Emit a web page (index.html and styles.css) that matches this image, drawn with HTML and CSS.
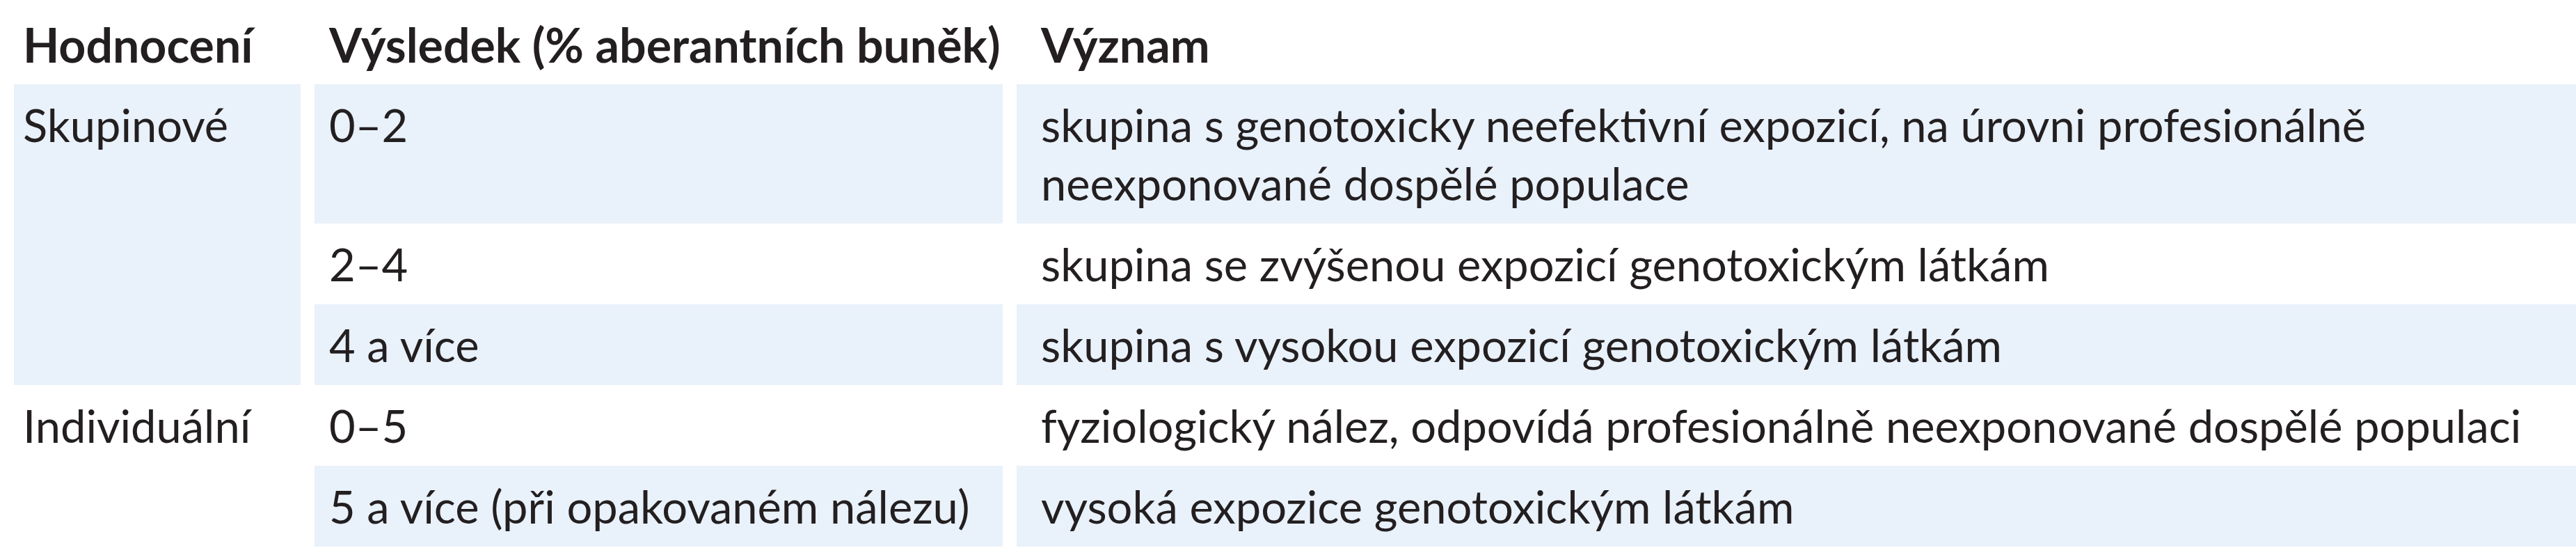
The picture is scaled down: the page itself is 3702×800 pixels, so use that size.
FILE: index.html
```html
<!DOCTYPE html>
<html lang="cs">
<head>
<meta charset="utf-8">
<title>Hodnocení chromozomových aberací</title>
<link rel="stylesheet" href="styles.css">
</head>
<body>
<table class="grid">
  <colgroup>
    <col class="c1">
    <col class="c2">
    <col class="c3">
  </colgroup>
  <thead>
    <tr class="head">
      <th class="p1">Hodnocení</th>
      <th class="p2">Výsledek (% aberantních buněk)</th>
      <th class="p3">Význam</th>
    </tr>
  </thead>
  <tbody>
    <tr>
      <td class="p1 tint" rowspan="3">Skupinové</td>
      <td class="p2 tint">0–2</td>
      <td class="p3 tint">skupina s genotoxicky neefektivní expozicí, na úrovni profesionálně<br>neexponované dospělé populace</td>
    </tr>
    <tr>
      <td class="p2">2–4</td>
      <td class="p3">skupina se zvýšenou expozicí genotoxickým látkám</td>
    </tr>
    <tr>
      <td class="p2 tint">4 a více</td>
      <td class="p3 tint">skupina s vysokou expozicí genotoxickým látkám</td>
    </tr>
    <tr>
      <td class="p1" rowspan="2">Individuální</td>
      <td class="p2">0–5</td>
      <td class="p3">fyziologický nález, odpovídá profesionálně neexponované dospělé populaci</td>
    </tr>
    <tr>
      <td class="p2 tint">5 a více (při opakovaném nálezu)</td>
      <td class="p3 tint">vysoká expozice genotoxickým látkám</td>
    </tr>
  </tbody>
</table>
</body>
</html>
```
FILE: styles.css
```css
html, body {
  margin: 0;
  padding: 0;
  background: #ffffff;
}

body {
  overflow: hidden;
  font-family: Lato, "Liberation Sans", sans-serif;
  font-size: 65px;
  line-height: 84px;
  color: #231f20;
}

.grid {
  border-collapse: separate;
  border-spacing: 20px 0;
  table-layout: fixed;
  width: calc(100% + 20px);
}

.c1 { width: 412px; }
.c2 { width: 989px; }

th, td {
  text-align: left;
  vertical-align: top;
  padding-top: 16px;
  padding-bottom: 16px;
  padding-right: 0;
  white-space: nowrap;
}

th {
  font-weight: bold;
  font-size: 68px;
}

.head th {
  padding-top: 22px;
  padding-bottom: 15px;
}

.p1 { padding-left: 13px; }
.p2 { padding-left: 21px; }
.p3 { padding-left: 35px; }

.tint {
  background: #e9f1fa;
}
```
